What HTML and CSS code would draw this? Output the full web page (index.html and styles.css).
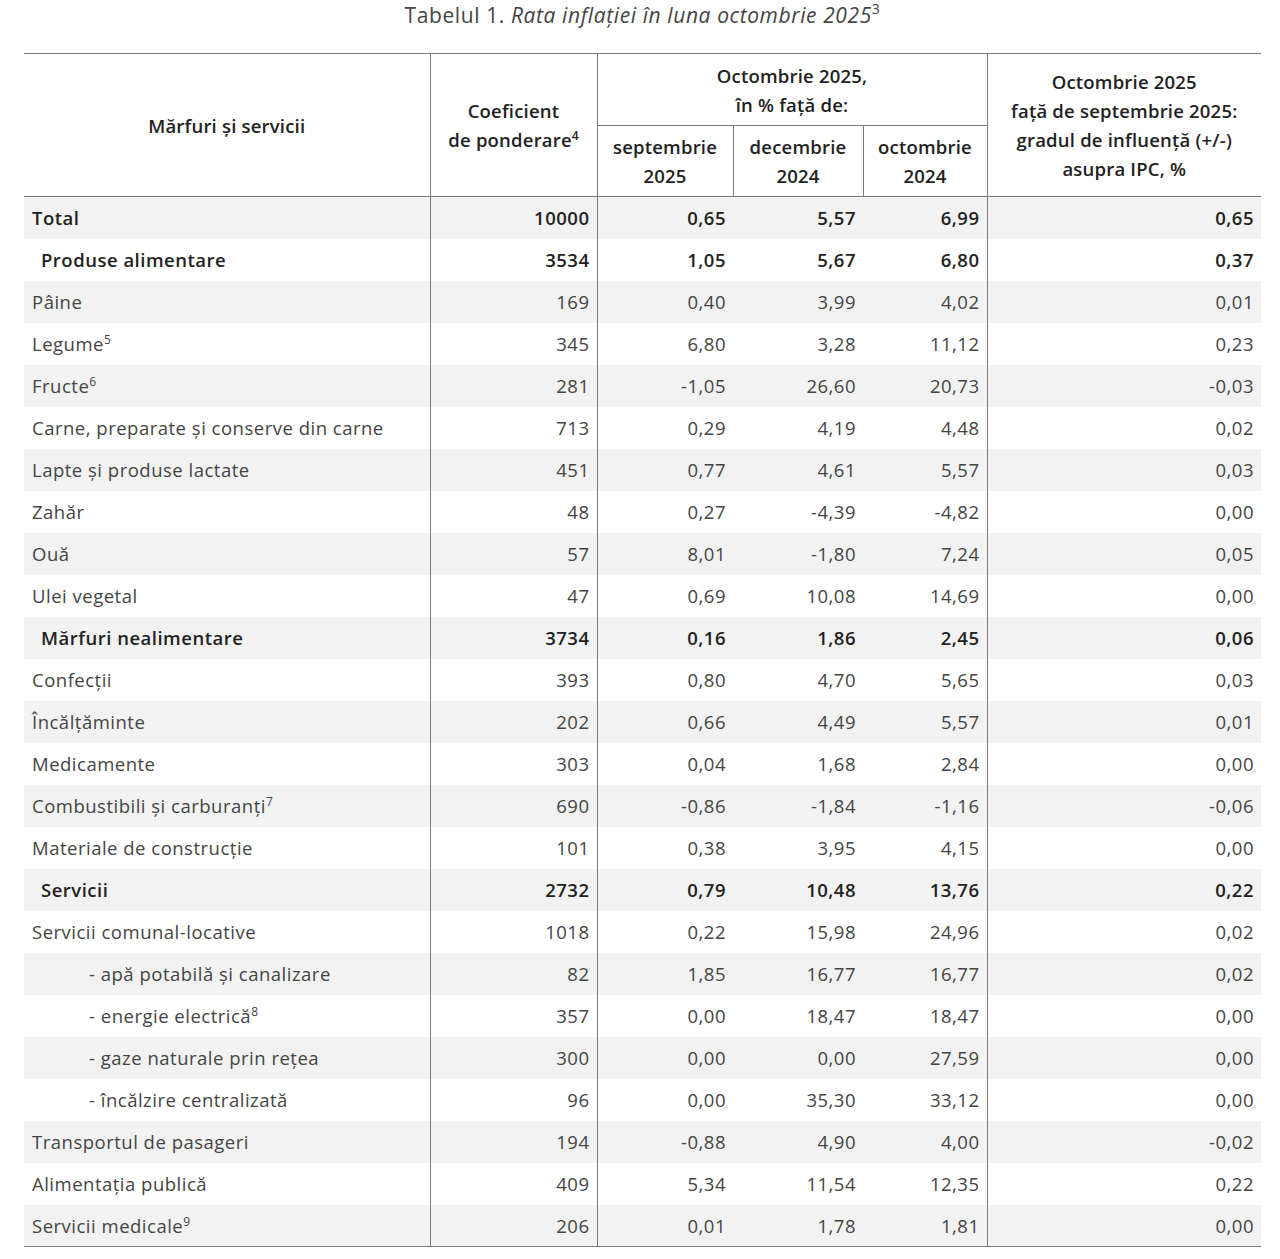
FILE: index.html
```html
<!DOCTYPE html>
<html lang="ro">
<head>
<meta charset="utf-8">
<title>Tabelul 1</title>
<link rel="stylesheet" href="styles.css">
</head>
<body>
<div class="page">
  <h1 class="caption">Tabelul 1. <em>Rata inflației în luna octombrie 2025</em><sup>3</sup></h1>
  <table class="cpi">
    <colgroup>
      <col class="c1"><col class="c2"><col class="c3"><col class="c4"><col class="c5"><col class="c6">
    </colgroup>
    <thead>
      <tr class="h1">
        <th rowspan="2">Mărfuri și servicii</th>
        <th rowspan="2">Coeficient<br>de ponderare<sup>4</sup></th>
        <th colspan="3">Octombrie 2025,<br>în % față de:</th>
        <th rowspan="2">Octombrie 2025<br>față de septembrie 2025:<br>gradul de influență (+/-)<br>asupra IPC, %</th>
      </tr>
      <tr class="h2">
        <th>septembrie<br>2025</th>
        <th>decembrie<br>2024</th>
        <th>octombrie<br>2024</th>
      </tr>
    </thead>
    <tbody>
      <tr class="b"><td>Total</td><td>10000</td><td>0,65</td><td>5,57</td><td>6,99</td><td>0,65</td></tr>
      <tr class="b g"><td>Produse alimentare</td><td>3534</td><td>1,05</td><td>5,67</td><td>6,80</td><td>0,37</td></tr>
      <tr><td>Pâine</td><td>169</td><td>0,40</td><td>3,99</td><td>4,02</td><td>0,01</td></tr>
      <tr><td>Legume<sup>5</sup></td><td>345</td><td>6,80</td><td>3,28</td><td>11,12</td><td>0,23</td></tr>
      <tr><td>Fructe<sup>6</sup></td><td>281</td><td>-1,05</td><td>26,60</td><td>20,73</td><td>-0,03</td></tr>
      <tr><td>Carne, preparate și conserve din carne</td><td>713</td><td>0,29</td><td>4,19</td><td>4,48</td><td>0,02</td></tr>
      <tr><td>Lapte și produse lactate</td><td>451</td><td>0,77</td><td>4,61</td><td>5,57</td><td>0,03</td></tr>
      <tr><td>Zahăr</td><td>48</td><td>0,27</td><td>-4,39</td><td>-4,82</td><td>0,00</td></tr>
      <tr><td>Ouă</td><td>57</td><td>8,01</td><td>-1,80</td><td>7,24</td><td>0,05</td></tr>
      <tr><td>Ulei vegetal</td><td>47</td><td>0,69</td><td>10,08</td><td>14,69</td><td>0,00</td></tr>
      <tr class="b g"><td>Mărfuri nealimentare</td><td>3734</td><td>0,16</td><td>1,86</td><td>2,45</td><td>0,06</td></tr>
      <tr><td>Confecții</td><td>393</td><td>0,80</td><td>4,70</td><td>5,65</td><td>0,03</td></tr>
      <tr><td>Încălțăminte</td><td>202</td><td>0,66</td><td>4,49</td><td>5,57</td><td>0,01</td></tr>
      <tr><td>Medicamente</td><td>303</td><td>0,04</td><td>1,68</td><td>2,84</td><td>0,00</td></tr>
      <tr><td>Combustibili și carburanți<sup>7</sup></td><td>690</td><td>-0,86</td><td>-1,84</td><td>-1,16</td><td>-0,06</td></tr>
      <tr><td>Materiale de construcție</td><td>101</td><td>0,38</td><td>3,95</td><td>4,15</td><td>0,00</td></tr>
      <tr class="b g"><td>Servicii</td><td>2732</td><td>0,79</td><td>10,48</td><td>13,76</td><td>0,22</td></tr>
      <tr><td>Servicii comunal-locative</td><td>1018</td><td>0,22</td><td>15,98</td><td>24,96</td><td>0,02</td></tr>
      <tr class="sub"><td>- apă potabilă și canalizare</td><td>82</td><td>1,85</td><td>16,77</td><td>16,77</td><td>0,02</td></tr>
      <tr class="sub"><td>- energie electrică<sup>8</sup></td><td>357</td><td>0,00</td><td>18,47</td><td>18,47</td><td>0,00</td></tr>
      <tr class="sub"><td>- gaze naturale prin rețea</td><td>300</td><td>0,00</td><td>0,00</td><td>27,59</td><td>0,00</td></tr>
      <tr class="sub"><td>- încălzire centralizată</td><td>96</td><td>0,00</td><td>35,30</td><td>33,12</td><td>0,00</td></tr>
      <tr><td>Transportul de pasageri</td><td>194</td><td>-0,88</td><td>4,90</td><td>4,00</td><td>-0,02</td></tr>
      <tr><td>Alimentația publică</td><td>409</td><td>5,34</td><td>11,54</td><td>12,35</td><td>0,22</td></tr>
      <tr><td>Servicii medicale<sup>9</sup></td><td>206</td><td>0,01</td><td>1,78</td><td>1,81</td><td>0,00</td></tr>
    </tbody>
  </table>
</div>
</body>
</html>
```

FILE: styles.css
```css
html, body {
  margin: 0;
  padding: 0;
  background: #fff;
}
body {
  font-family: "Open Sans", "Lato", sans-serif;
  color: #444;
}
.page {
  padding: 0 19px 0 24px;
}
.caption {
  margin: 0;
  height: 53px;
  padding-top: 1px;
  box-sizing: border-box;
  text-align: center;
  font-size: 21px;
  font-weight: 400;
  line-height: 28px;
  color: #444;
  letter-spacing: 0.6px;
}
.caption em {
  font-style: italic;
}
.caption sup {
  font-size: 14px;
  line-height: 0;
  vertical-align: 9px;
}
.cpi {
  width: 1237px;
  border-collapse: collapse;
  table-layout: fixed;
  font-size: 18.5px;
  letter-spacing: 0.5px;
}
.c1 { width: 406px; }
.c2 { width: 167px; }
.c3 { width: 136px; }
.c4 { width: 130px; }
.c5 { width: 124px; }
.c6 { width: 274px; }
.cpi thead th {
  font-weight: 600;
  color: #222;
  font-size: 18.5px;
  letter-spacing: 0.2px;
  line-height: 29px;
  text-align: center;
  vertical-align: middle;
  border: 1px solid #7a7a7a;
  padding: 0 4px;
}
.cpi thead tr.h1 th:first-child { border-left: none; }
.cpi thead tr.h1 th:last-child { border-right: none; }
.cpi thead tr.h1 { height: 72px; }
.cpi thead tr.h2 { height: 71px; }
.cpi thead tr.h1 th { border-top: 1.5px solid #7a7a7a; }
.cpi thead th { border-bottom: 1.5px solid #7a7a7a; }
.cpi sup {
  font-size: 12px;
  line-height: 0;
  vertical-align: 7px;
  letter-spacing: 0;
}
.cpi tbody tr {
  height: 42px;
}
.cpi tbody tr:nth-child(odd) {
  background: #f2f2f2;
}
.cpi tbody td {
  padding: 0 7px 0 8px;
  text-align: right;
  vertical-align: middle;
  color: #444;
  white-space: nowrap;
}
.cpi tbody td:first-child {
  text-align: left;
  border-right: 1px solid #7a7a7a;
}
.cpi tbody td:nth-child(2) {
  border-right: 1px solid #7a7a7a;
}
.cpi tbody td:nth-child(5) {
  border-right: 1px solid #7a7a7a;
}
.cpi tbody tr.b td {
  font-weight: 600;
  color: #222;
}
.cpi tbody tr.g td:first-child {
  padding-left: 17px;
}
.cpi tbody tr.sub td:first-child {
  padding-left: 65px;
}
.cpi tbody tr:last-child td {
  border-bottom: 1.5px solid #7a7a7a;
}
```
